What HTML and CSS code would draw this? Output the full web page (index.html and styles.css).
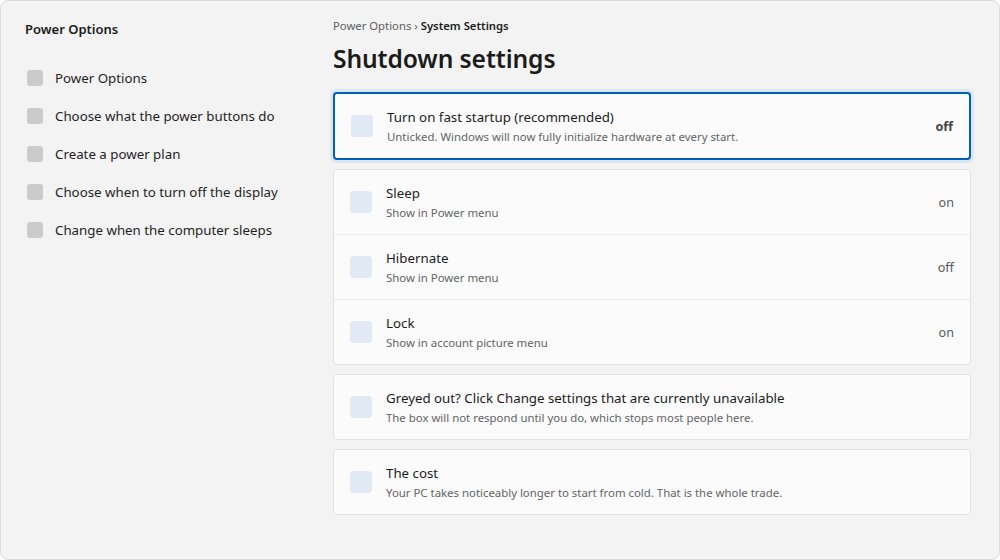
FILE: index.html
```html
<!DOCTYPE html>
<html lang="en">
<head>
<meta charset="utf-8">
<title>Shutdown settings</title>
<link rel="stylesheet" href="styles.css">
</head>
<body>
<div class="window">
  <aside class="sidebar">
    <div class="side-title">Power Options</div>
    <ul class="nav">
      <li class="nav-item"><span class="nav-box"></span><span>Power Options</span></li>
      <li class="nav-item"><span class="nav-box"></span><span>Choose what the power buttons do</span></li>
      <li class="nav-item"><span class="nav-box"></span><span>Create a power plan</span></li>
      <li class="nav-item"><span class="nav-box"></span><span>Choose when to turn off the display</span></li>
      <li class="nav-item"><span class="nav-box"></span><span>Change when the computer sleeps</span></li>
    </ul>
  </aside>
  <main class="main">
    <div class="crumbs"><span class="crumb-muted">Power Options</span> <span class="crumb-sep">›</span> <span class="crumb-cur">System Settings</span></div>
    <h1 class="page-title">Shutdown settings</h1>
    <div class="stack">
      <div class="card card-focus">
        <div class="row">
          <span class="check"></span>
          <div class="row-text">
            <div class="row-title">Turn on fast startup (recommended)</div>
            <div class="row-desc">Unticked. Windows will now fully initialize hardware at every start.</div>
          </div>
          <span class="row-value strong">off</span>
        </div>
      </div>
      <div class="card">
        <div class="row">
          <span class="check"></span>
          <div class="row-text">
            <div class="row-title">Sleep</div>
            <div class="row-desc">Show in Power menu</div>
          </div>
          <span class="row-value">on</span>
        </div>
        <div class="row sep">
          <span class="check"></span>
          <div class="row-text">
            <div class="row-title">Hibernate</div>
            <div class="row-desc">Show in Power menu</div>
          </div>
          <span class="row-value">off</span>
        </div>
        <div class="row sep">
          <span class="check"></span>
          <div class="row-text">
            <div class="row-title">Lock</div>
            <div class="row-desc">Show in account picture menu</div>
          </div>
          <span class="row-value">on</span>
        </div>
      </div>
      <div class="card">
        <div class="row">
          <span class="check"></span>
          <div class="row-text">
            <div class="row-title">Greyed out? Click Change settings that are currently unavailable</div>
            <div class="row-desc">The box will not respond until you do, which stops most people here.</div>
          </div>
        </div>
      </div>
      <div class="card">
        <div class="row">
          <span class="check"></span>
          <div class="row-text">
            <div class="row-title">The cost</div>
            <div class="row-desc">Your PC takes noticeably longer to start from cold. That is the whole trade.</div>
          </div>
        </div>
      </div>
    </div>
  </main>
</div>
</body>
</html>
```

FILE: styles.css
```css
* { box-sizing: border-box; }
html, body { margin: 0; padding: 0; }
body {
  font-family: "Noto Sans", "Open Sans", sans-serif;
  color: #1b1b1b;
  background: #ffffff;
}
.window {
  width: 1000px;
  height: 560px;
  background: #f3f3f3;
  border: 1px solid #dcdcdc;
  border-radius: 8px;
  display: flex;
  overflow: hidden;
}
.sidebar {
  width: 332px;
  flex: none;
  padding: 19px 0 0 24px;
}
.side-title {
  font-size: 13px;
  font-weight: 600;
  line-height: 18px;
}
.nav {
  list-style: none;
  margin: 30px 0 0;
  padding: 0;
  display: flex;
  flex-direction: column;
  gap: 18px;
}
.nav-item {
  display: flex;
  align-items: center;
  gap: 12px;
  font-size: 13.3px;
  line-height: 20px;
  color: #1f1f1f;
  padding-left: 2px;
}
.nav-box {
  width: 16px;
  height: 16px;
  border-radius: 3px;
  background: #cbcbcb;
  flex: none;
}
.main {
  flex: 1;
  padding: 16px 28px 0 0;
}
.crumbs {
  font-size: 11.3px;
  line-height: 18px;
  color: #5f5f5f;
}
.crumb-cur { color: #1b1b1b; font-weight: 600; }
.crumb-sep { color: #5f5f5f; }
.page-title {
  margin: 6px 0 0;
  font-size: 24.6px;
  font-weight: 600;
  line-height: 36px;
  letter-spacing: -0.1px;
}
.stack {
  margin-top: 15px;
  display: flex;
  flex-direction: column;
  gap: 9px;
}
.card {
  background: #fbfbfb;
  border: 1px solid #e3e3e3;
  border-radius: 4px;
}
.card-focus {
  border: 2px solid #005fb8;
  border-radius: 4px;
  box-shadow: 0 0 0 3px #dbe6f1;
}
.card-focus .row { padding-left: 16px; padding-right: 16px; }
.row {
  height: 64px;
  display: flex;
  align-items: center;
  padding: 0 16px;
}
.row.sep { border-top: 1px solid #ececec; height: 65px; }
.check {
  width: 22px;
  height: 22px;
  border-radius: 4px;
  background: #e1e9f4;
  flex: none;
  margin-right: 14px;
}
.row-text { flex: 1; min-width: 0; padding-top: 2px; }
.row-title {
  font-size: 13.3px;
  line-height: 19px;
  color: #1b1b1b;
}
.row-desc {
  font-size: 11.4px;
  line-height: 20px;
  color: #646464;
}
.row-value {
  font-size: 12.6px;
  color: #5a5a5a;
}
.row-value.strong { font-weight: 700; color: #444; }
```
